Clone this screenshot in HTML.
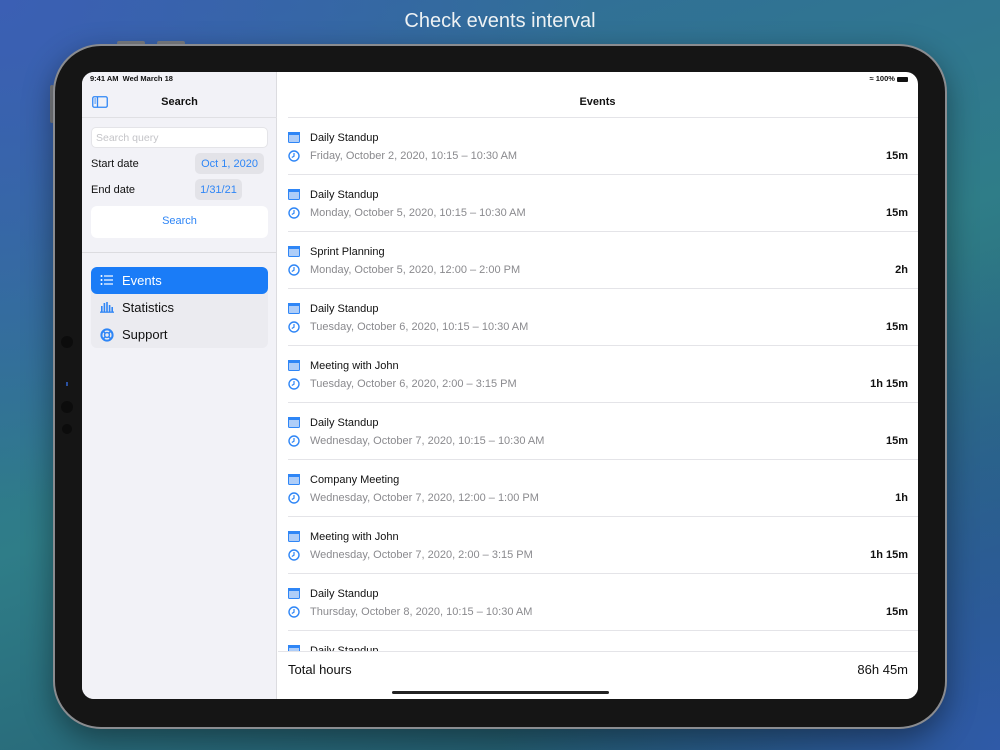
<!DOCTYPE html>
<html><head><meta charset="utf-8"><style>
*{margin:0;padding:0;box-sizing:border-box}
body{width:1000px;height:750px;overflow:hidden;position:relative;font-family:"Liberation Sans",sans-serif;
background:
radial-gradient(ellipse 600px 500px at 0% 0%, #3b5fb4 0%, rgba(59,95,180,0) 100%),
radial-gradient(ellipse 500px 500px at 100% 100%, #2f5aa8 0%, rgba(47,90,168,0) 100%),
linear-gradient(160deg,#32689f 0%,#2f7d88 50%,#1f5066 100%);}
.title{position:absolute;top:10px;width:100%;text-align:center;color:#eef2f4;font-size:20px;}
.dev{position:absolute;left:53px;top:44px;width:894px;height:685px;border-radius:48px;background:#151515;border:2px solid #8a8c90;box-shadow:0 10px 30px rgba(0,0,0,.4)}
.btn{position:absolute;background:#7a7d82;border-radius:2px}
.screen{position:absolute;left:82px;top:72px;width:836px;height:627px;border-radius:12px;overflow:hidden;background:#fff}
.side{position:absolute;left:0;top:0;width:195px;height:627px;background:#f2f2f7;border-right:1px solid #dcdce0}
.abs{position:absolute}
.t{position:absolute;white-space:nowrap}
.row{position:absolute;left:206px;width:630px;height:57px;border-top:1px solid #e4e4e8}
.row .n{position:absolute;left:22px;top:14px;font-size:11px;color:#111}
.row .d{position:absolute;left:22px;top:32px;font-size:11px;color:#8a8a8e}
.row .v{position:absolute;right:10px;top:32px;font-size:11px;font-weight:bold;color:#111}
.row svg{position:absolute;left:0}
</style></head><body>
<div class="title">Check events interval</div>
<div class="btn" style="left:117px;top:41px;width:28px;height:4px"></div>
<div class="btn" style="left:157px;top:41px;width:28px;height:4px"></div>
<div class="btn" style="left:50px;top:85px;width:4px;height:38px"></div>
<div class="dev"></div>
<div class="abs" style="left:61px;top:336px;width:12px;height:12px;border-radius:50%;background:#0c0c0c"></div>
<div class="abs" style="left:61px;top:401px;width:12px;height:12px;border-radius:50%;background:#0c0c0c"></div>
<div class="abs" style="left:62px;top:424px;width:10px;height:10px;border-radius:50%;background:#0c0c0c"></div>
<div class="abs" style="left:66px;top:382px;width:2px;height:4px;background:#2a50a0"></div>
<div class="screen">
 <div class="side">
  <div class="t" style="left:8px;top:2px;font-size:7.5px;font-weight:bold;color:#111">9:41 AM&nbsp; Wed March 18</div>
  <svg class="abs" style="left:10px;top:24px" width="16" height="12" viewBox="0 0 16 12"><rect x=".75" y=".75" width="14.5" height="10.5" rx="1.5" fill="none" stroke="#2f86f6" stroke-width="1.3"/><line x1="5.5" y1="1" x2="5.5" y2="11" stroke="#2f86f6" stroke-width="1.3"/><path d="M2.3 3h1.8M2.3 5h1.8M2.3 7h1.8" stroke="#2f86f6" stroke-width="1"/></svg>
  <div class="t" style="left:0;width:195px;text-align:center;top:24px;font-size:11px;font-weight:bold;color:#111">Search</div>
  <div class="abs" style="left:0;top:45px;width:195px;height:1px;background:#e0e0e4"></div>
  <div class="abs" style="left:9px;top:55px;width:177px;height:21px;background:#fff;border:1px solid #e4e4e8;border-radius:5px"></div>
  <div class="t" style="left:14px;top:60px;font-size:10.5px;color:#c4c4c8">Search query</div>
  <div class="t" style="left:9px;top:86px;font-size:11px;color:#111">Start date</div>
  <div class="abs" style="left:113px;top:81px;width:69px;height:21px;background:#e3e3e8;border-radius:5px"></div>
  <div class="t" style="left:113px;width:69px;text-align:center;top:86px;font-size:11px;color:#2f86f6">Oct 1, 2020</div>
  <div class="t" style="left:9px;top:112px;font-size:11px;color:#111">End date</div>
  <div class="abs" style="left:113px;top:107px;width:47px;height:21px;background:#e3e3e8;border-radius:5px"></div>
  <div class="t" style="left:113px;width:47px;text-align:center;top:112px;font-size:11px;color:#2f86f6">1/31/21</div>
  <div class="abs" style="left:9px;top:134px;width:177px;height:32px;background:#fff;border-radius:6px"></div>
  <div class="t" style="left:9px;width:177px;text-align:center;top:143px;font-size:11px;color:#2f86f6">Search</div>
  <div class="abs" style="left:0;top:180px;width:195px;height:1px;background:#dcdce0"></div>
  <div class="abs" style="left:9px;top:195px;width:177px;height:81px;background:#ebebf0;border-radius:6px"></div>
  <div class="abs" style="left:9px;top:195px;width:177px;height:27px;background:#1a7cf7;border-radius:6px"></div>
  <svg class="abs" style="left:18px;top:202px" width="14" height="12" viewBox="0 0 14 12"><g fill="#fff"><circle cx="1.5" cy="2" r="1"/><circle cx="1.5" cy="6" r="1"/><circle cx="1.5" cy="10" r="1"/><rect x="4" y="1.4" width="9" height="1.2"/><rect x="4" y="5.4" width="9" height="1.2"/><rect x="4" y="9.4" width="9" height="1.2"/></g></svg>
  <div class="t" style="left:40px;top:201px;font-size:13px;color:#fff">Events</div>
  <svg class="abs" style="left:18px;top:229px" width="14" height="12" viewBox="0 0 14 12"><g fill="#2f86f6"><rect x="1" y="5" width="1.6" height="6"/><rect x="3.6" y="2" width="1.6" height="9"/><rect x="6.2" y="1" width="1.6" height="10"/><rect x="8.8" y="4" width="1.6" height="7"/><rect x="11.4" y="6" width="1.6" height="5"/><rect x="0" y="10.5" width="14" height="1.3"/></g></svg>
  <div class="t" style="left:40px;top:228px;font-size:13px;color:#111">Statistics</div>
  <svg class="abs" style="left:18px;top:256px" width="14" height="14" viewBox="0 0 14 14"><circle cx="7" cy="7" r="5.6" fill="none" stroke="#2f86f6" stroke-width="2"/><circle cx="7" cy="7" r="2.4" fill="none" stroke="#2f86f6" stroke-width="1.4"/><path d="M3 3l2.3 2.3M11 3L8.7 5.3M3 11l2.3-2.3M11 11L8.7 8.7" stroke="#2f86f6" stroke-width="1.6"/></svg>
  <div class="t" style="left:40px;top:255px;font-size:13px;color:#111">Support</div>
 </div>
 <div class="t" style="right:10px;top:2px;font-size:7.5px;font-weight:bold;color:#111">&#8776; 100% <span style="display:inline-block;width:11px;height:5px;background:#111;border-radius:1px;vertical-align:middle"></span></div>
 <div class="t" style="left:195px;width:641px;text-align:center;top:24px;font-size:11px;font-weight:bold;color:#111">Events</div>
 <div class="row" style="top:45px"><svg style="top:14px" width="12" height="11" viewBox="0 0 12 11"><rect x=".5" y=".5" width="11" height="10" rx="1" fill="#aecdf8" stroke="#2f86f6"/><rect x="0" y="0" width="12" height="3" fill="#2f86f6"/></svg><svg style="top:32px" width="12" height="12" viewBox="0 0 12 12"><circle cx="6" cy="6" r="5" fill="none" stroke="#2f86f6" stroke-width="1.4"/><path d="M6 3v3.2L3.8 7.5" fill="none" stroke="#2f86f6" stroke-width="1.2"/></svg><div class="n">Daily Standup</div><div class="d">Friday, October 2, 2020, 10:15 – 10:30 AM</div><div class="v">15m</div></div>
 <div class="row" style="top:102px"><svg style="top:14px" width="12" height="11" viewBox="0 0 12 11"><rect x=".5" y=".5" width="11" height="10" rx="1" fill="#aecdf8" stroke="#2f86f6"/><rect x="0" y="0" width="12" height="3" fill="#2f86f6"/></svg><svg style="top:32px" width="12" height="12" viewBox="0 0 12 12"><circle cx="6" cy="6" r="5" fill="none" stroke="#2f86f6" stroke-width="1.4"/><path d="M6 3v3.2L3.8 7.5" fill="none" stroke="#2f86f6" stroke-width="1.2"/></svg><div class="n">Daily Standup</div><div class="d">Monday, October 5, 2020, 10:15 – 10:30 AM</div><div class="v">15m</div></div>
 <div class="row" style="top:159px"><svg style="top:14px" width="12" height="11" viewBox="0 0 12 11"><rect x=".5" y=".5" width="11" height="10" rx="1" fill="#aecdf8" stroke="#2f86f6"/><rect x="0" y="0" width="12" height="3" fill="#2f86f6"/></svg><svg style="top:32px" width="12" height="12" viewBox="0 0 12 12"><circle cx="6" cy="6" r="5" fill="none" stroke="#2f86f6" stroke-width="1.4"/><path d="M6 3v3.2L3.8 7.5" fill="none" stroke="#2f86f6" stroke-width="1.2"/></svg><div class="n">Sprint Planning</div><div class="d">Monday, October 5, 2020, 12:00 – 2:00 PM</div><div class="v">2h</div></div>
 <div class="row" style="top:216px"><svg style="top:14px" width="12" height="11" viewBox="0 0 12 11"><rect x=".5" y=".5" width="11" height="10" rx="1" fill="#aecdf8" stroke="#2f86f6"/><rect x="0" y="0" width="12" height="3" fill="#2f86f6"/></svg><svg style="top:32px" width="12" height="12" viewBox="0 0 12 12"><circle cx="6" cy="6" r="5" fill="none" stroke="#2f86f6" stroke-width="1.4"/><path d="M6 3v3.2L3.8 7.5" fill="none" stroke="#2f86f6" stroke-width="1.2"/></svg><div class="n">Daily Standup</div><div class="d">Tuesday, October 6, 2020, 10:15 – 10:30 AM</div><div class="v">15m</div></div>
 <div class="row" style="top:273px"><svg style="top:14px" width="12" height="11" viewBox="0 0 12 11"><rect x=".5" y=".5" width="11" height="10" rx="1" fill="#aecdf8" stroke="#2f86f6"/><rect x="0" y="0" width="12" height="3" fill="#2f86f6"/></svg><svg style="top:32px" width="12" height="12" viewBox="0 0 12 12"><circle cx="6" cy="6" r="5" fill="none" stroke="#2f86f6" stroke-width="1.4"/><path d="M6 3v3.2L3.8 7.5" fill="none" stroke="#2f86f6" stroke-width="1.2"/></svg><div class="n">Meeting with John</div><div class="d">Tuesday, October 6, 2020, 2:00 – 3:15 PM</div><div class="v">1h 15m</div></div>
 <div class="row" style="top:330px"><svg style="top:14px" width="12" height="11" viewBox="0 0 12 11"><rect x=".5" y=".5" width="11" height="10" rx="1" fill="#aecdf8" stroke="#2f86f6"/><rect x="0" y="0" width="12" height="3" fill="#2f86f6"/></svg><svg style="top:32px" width="12" height="12" viewBox="0 0 12 12"><circle cx="6" cy="6" r="5" fill="none" stroke="#2f86f6" stroke-width="1.4"/><path d="M6 3v3.2L3.8 7.5" fill="none" stroke="#2f86f6" stroke-width="1.2"/></svg><div class="n">Daily Standup</div><div class="d">Wednesday, October 7, 2020, 10:15 – 10:30 AM</div><div class="v">15m</div></div>
 <div class="row" style="top:387px"><svg style="top:14px" width="12" height="11" viewBox="0 0 12 11"><rect x=".5" y=".5" width="11" height="10" rx="1" fill="#aecdf8" stroke="#2f86f6"/><rect x="0" y="0" width="12" height="3" fill="#2f86f6"/></svg><svg style="top:32px" width="12" height="12" viewBox="0 0 12 12"><circle cx="6" cy="6" r="5" fill="none" stroke="#2f86f6" stroke-width="1.4"/><path d="M6 3v3.2L3.8 7.5" fill="none" stroke="#2f86f6" stroke-width="1.2"/></svg><div class="n">Company Meeting</div><div class="d">Wednesday, October 7, 2020, 12:00 – 1:00 PM</div><div class="v">1h</div></div>
 <div class="row" style="top:444px"><svg style="top:14px" width="12" height="11" viewBox="0 0 12 11"><rect x=".5" y=".5" width="11" height="10" rx="1" fill="#aecdf8" stroke="#2f86f6"/><rect x="0" y="0" width="12" height="3" fill="#2f86f6"/></svg><svg style="top:32px" width="12" height="12" viewBox="0 0 12 12"><circle cx="6" cy="6" r="5" fill="none" stroke="#2f86f6" stroke-width="1.4"/><path d="M6 3v3.2L3.8 7.5" fill="none" stroke="#2f86f6" stroke-width="1.2"/></svg><div class="n">Meeting with John</div><div class="d">Wednesday, October 7, 2020, 2:00 – 3:15 PM</div><div class="v">1h 15m</div></div>
 <div class="row" style="top:501px"><svg style="top:14px" width="12" height="11" viewBox="0 0 12 11"><rect x=".5" y=".5" width="11" height="10" rx="1" fill="#aecdf8" stroke="#2f86f6"/><rect x="0" y="0" width="12" height="3" fill="#2f86f6"/></svg><svg style="top:32px" width="12" height="12" viewBox="0 0 12 12"><circle cx="6" cy="6" r="5" fill="none" stroke="#2f86f6" stroke-width="1.4"/><path d="M6 3v3.2L3.8 7.5" fill="none" stroke="#2f86f6" stroke-width="1.2"/></svg><div class="n">Daily Standup</div><div class="d">Thursday, October 8, 2020, 10:15 – 10:30 AM</div><div class="v">15m</div></div>
 <div class="row" style="top:558px"><svg style="top:14px" width="12" height="11" viewBox="0 0 12 11"><rect x=".5" y=".5" width="11" height="10" rx="1" fill="#aecdf8" stroke="#2f86f6"/><rect x="0" y="0" width="12" height="3" fill="#2f86f6"/></svg><div class="n">Daily Standup</div></div>
 <div class="abs" style="left:196px;top:579px;width:640px;height:48px;background:#fff;border-top:1px solid #e4e4e8"></div>
 <div class="t" style="left:206px;top:590px;font-size:13px;color:#111">Total hours</div>
 <div class="t" style="right:10px;top:590px;font-size:13px;color:#111">86h 45m</div>
 <div class="abs" style="left:310px;top:619px;width:217px;height:3px;border-radius:2px;background:#222"></div>
</div>
</body></html>
